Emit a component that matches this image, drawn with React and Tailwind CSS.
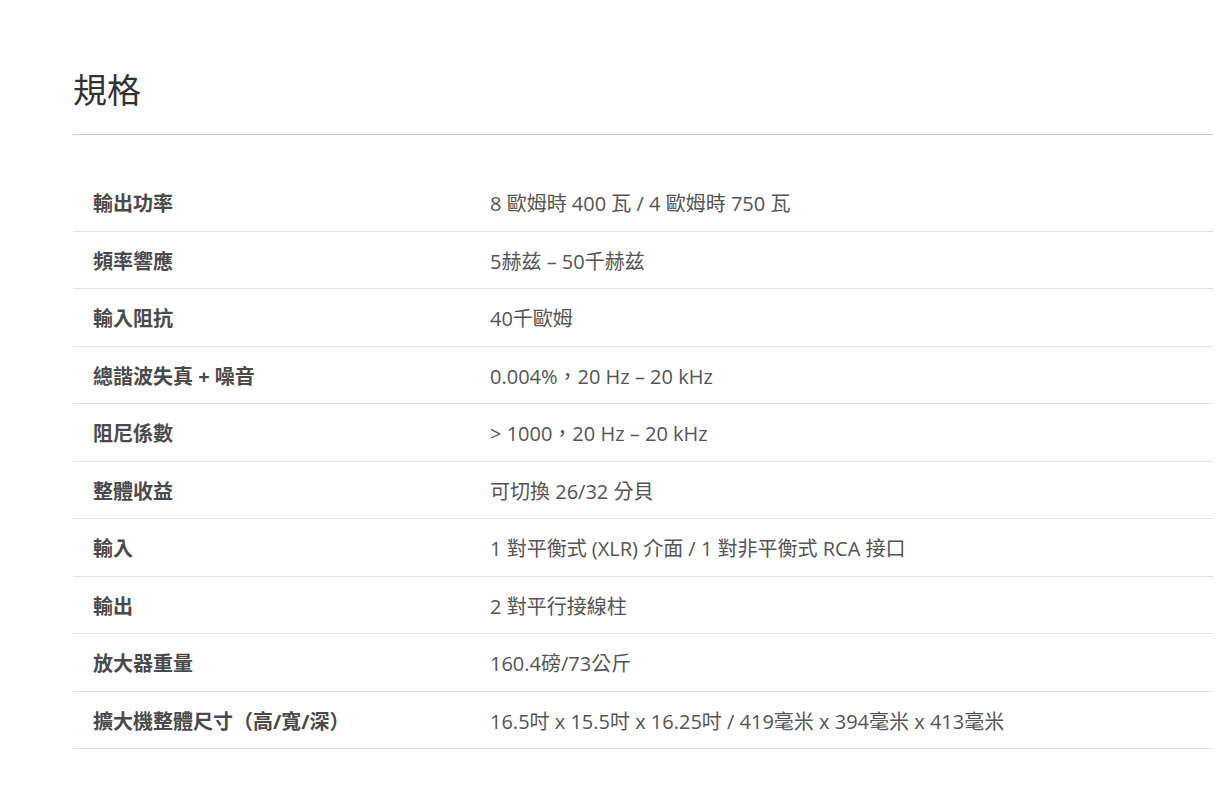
const specs = [
    ['輸出功率', '8 歐姆時 400 瓦 / 4 歐姆時 750 瓦'],
    ['頻率響應', '5赫兹 – 50千赫兹'],
    ['輸入阻抗', '40千歐姆'],
    ['總諧波失真 + 噪音', '0.004%，20 Hz – 20 kHz'],
    ['阻尼係數', '> 1000，20 Hz – 20 kHz'],
    ['整體收益', '可切換 26/32 分貝'],
    ['輸入', '1 對平衡式 (XLR) 介面 / 1 對非平衡式 RCA 接口'],
    ['輸出', '2 對平行接線柱'],
    ['放大器重量', '160.4磅/73公斤'],
    ['擴大機整體尺寸（高/寬/深）', '16.5吋 x 15.5吋 x 16.25吋 / 419毫米 x 394毫米 x 413毫米'],
];

const App = () => {
    return (
        <div className="w-full min-h-[786px] bg-white font-['Open_Sans','Noto_Sans_CJK_TC',sans-serif]">
            <div className="pl-[73px] pr-[13px] pt-[66px]">
                {/* Title */}
                <h2 className="text-[34px] leading-[48px] font-normal text-[#333] pb-[20px] border-b border-[#ccc]">
                    規格
                </h2>

                {/* Spec table */}
                <div className="mt-[39px]">
                    {specs.map(([label, value]) => (
                        <div
                            key={label}
                            className="grid grid-cols-[417px_1fr] items-center h-[57.5px] pt-[4px] border-b border-[#e2e2e2]"
                        >
                            <div className="pl-5 text-[20px] font-bold text-[#4a4a4a]">{label}</div>
                            <div className="text-[20px] text-[#555]">{value}</div>
                        </div>
                    ))}
                </div>
            </div>
        </div>
    );
};

export default App;
